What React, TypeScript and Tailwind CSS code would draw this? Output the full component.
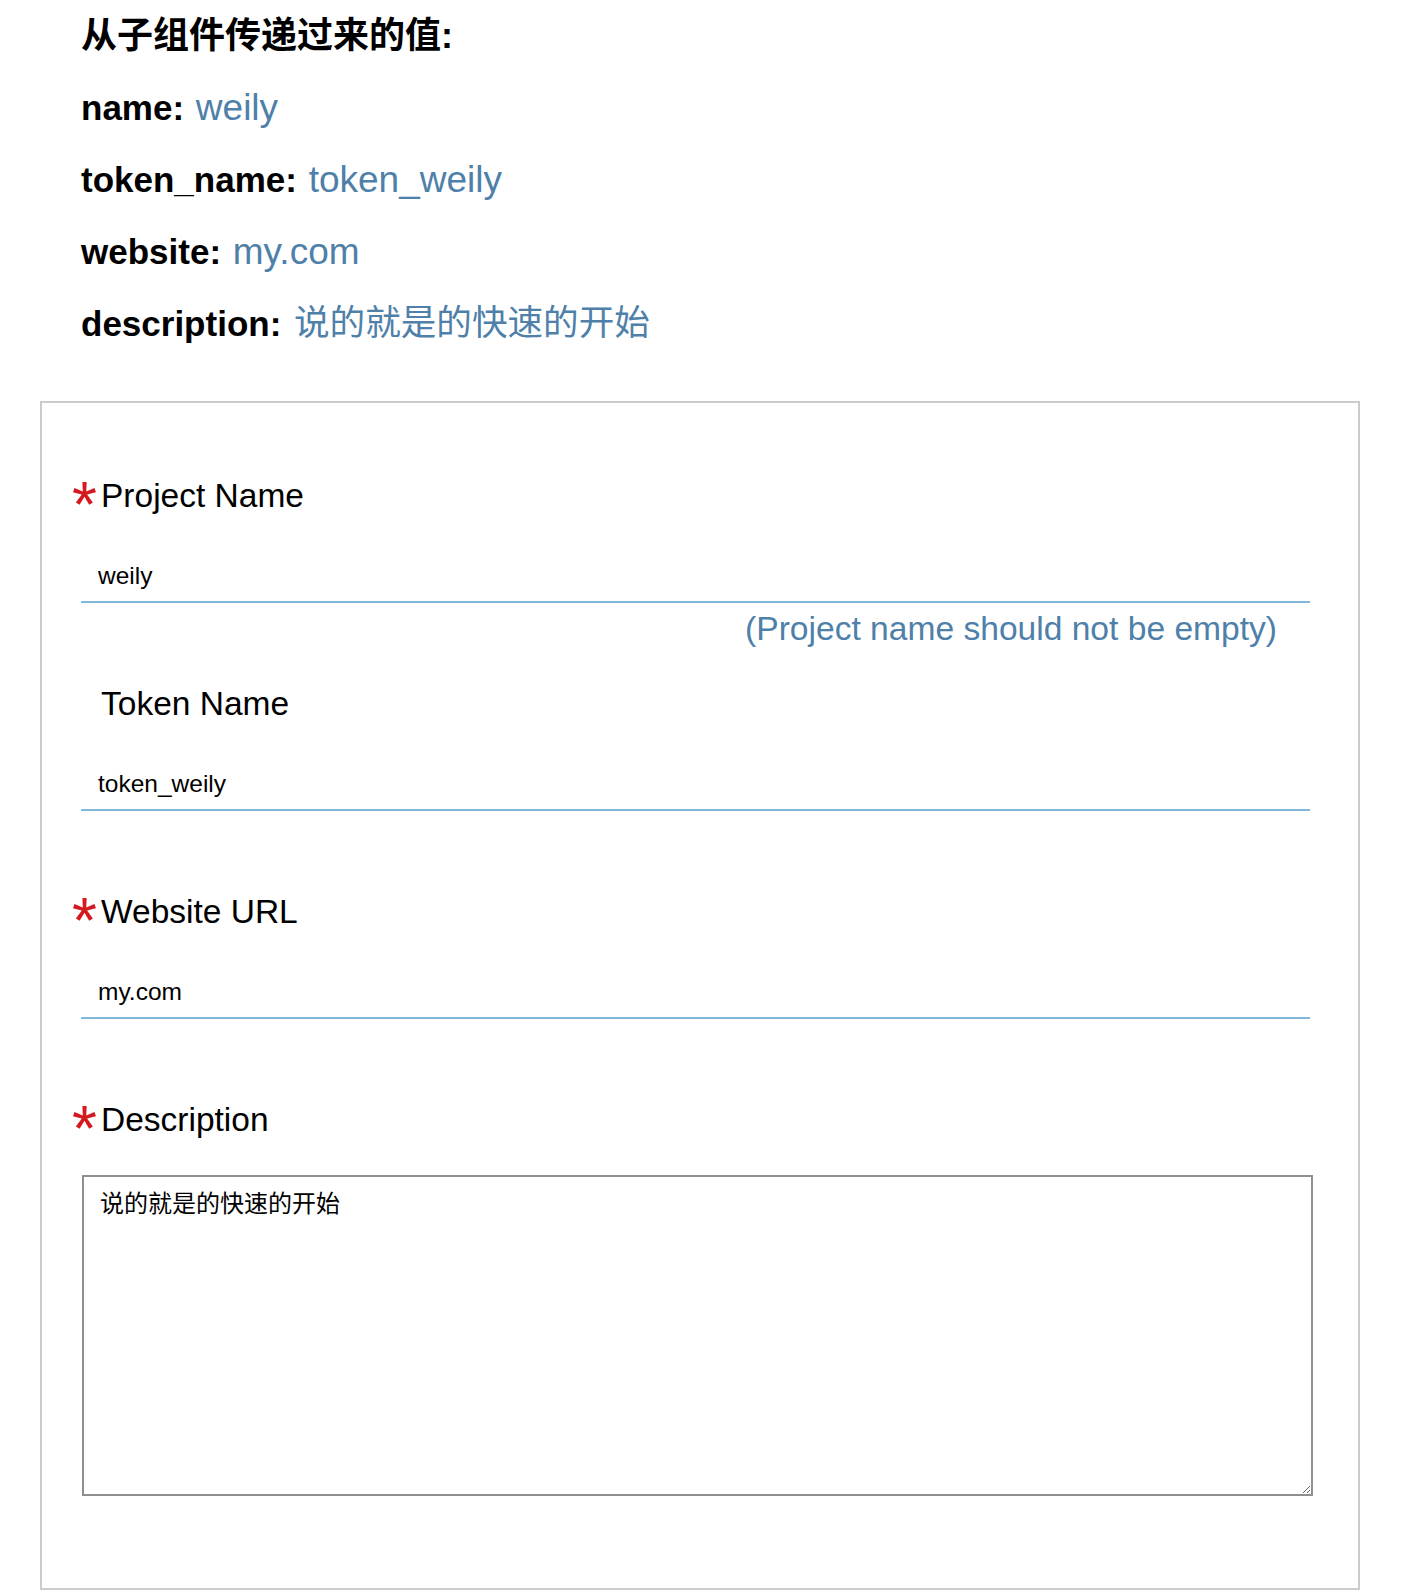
import React from "react";

const FONT = "font-['Liberation_Sans','Noto_Sans_CJK_SC',sans-serif]";

type Field = {
  label: string;
  value: string;
  required: boolean;
  error?: string;
};

const fields: Field[] = [
  { label: "Project Name", value: "weily", required: true, error: "(Project name should not be empty)" },
  { label: "Token Name", value: "token_weily", required: false },
  { label: "Website URL", value: "my.com", required: true },
];

const summary = [
  { key: "name", value: "weily", cjk: false },
  { key: "token_name", value: "token_weily", cjk: false },
  { key: "website", value: "my.com", cjk: false },
  { key: "description", value: "说的就是的快速的开始", cjk: true },
];

function Label({ text, required }: { text: string; required: boolean }) {
  return (
    <div className="flex h-[48px] items-start pl-[30px]">
      <span className="block h-[48px] w-[29px] overflow-visible pt-[1px] text-[64px] leading-none text-[#d41a1f]">
        {required ? "*" : ""}
      </span>
      <span className="self-center text-[33.5px] text-black">{text}</span>
    </div>
  );
}

export default function App() {
  return (
    <div className={`min-h-screen bg-white ${FONT}`}>
      <div className="pl-[81px]">
        <div className="flex h-[72px] items-center text-[36px] font-bold text-black">从子组件传递过来的值:</div>
        {summary.map((s) => (
          <div key={s.key} className="flex h-[72px] items-center whitespace-pre">
            <span className="text-[35px] font-bold text-black">{s.key}: </span>
            <span className={s.cjk ? "pl-[3px] text-[35.6px] text-[#4e80a9]" : "pl-[2px] text-[37px] text-[#4e80a9]"}>
              {s.value}
            </span>
          </div>
        ))}
      </div>

      <div className="ml-[40px] mt-[41px] w-[1320px] border-2 border-[#cccccc] pb-[92px] pt-[69px]">
        {fields.map((f) => (
          <div key={f.label} className="pb-[31px]">
            <Label text={f.label} required={f.required} />
            <input
              readOnly
              value={f.value}
              className="ml-[39px] mt-[31px] block h-[52px] w-[1229px] border-b-2 border-[#80b7db] bg-white pl-[17px] text-[24.5px] text-black outline-none"
            />
            <div className="ml-[39px] mt-[6px] flex h-[40px] w-[1229px] items-center justify-end pr-[33px] text-[33.6px] text-[#4e80a9]">
              {f.error ?? ""}
            </div>
          </div>
        ))}

        <Label text="Description" required />
        <textarea
          readOnly
          value="说的就是的快速的开始"
          className="ml-[40px] mt-[31px] block h-[321px] w-[1231px] border-2 border-[#8f8f8f] bg-white px-[16px] pt-[10px] text-[24px] leading-[1.4] text-black outline-none"
        />
      </div>
    </div>
  );
}
